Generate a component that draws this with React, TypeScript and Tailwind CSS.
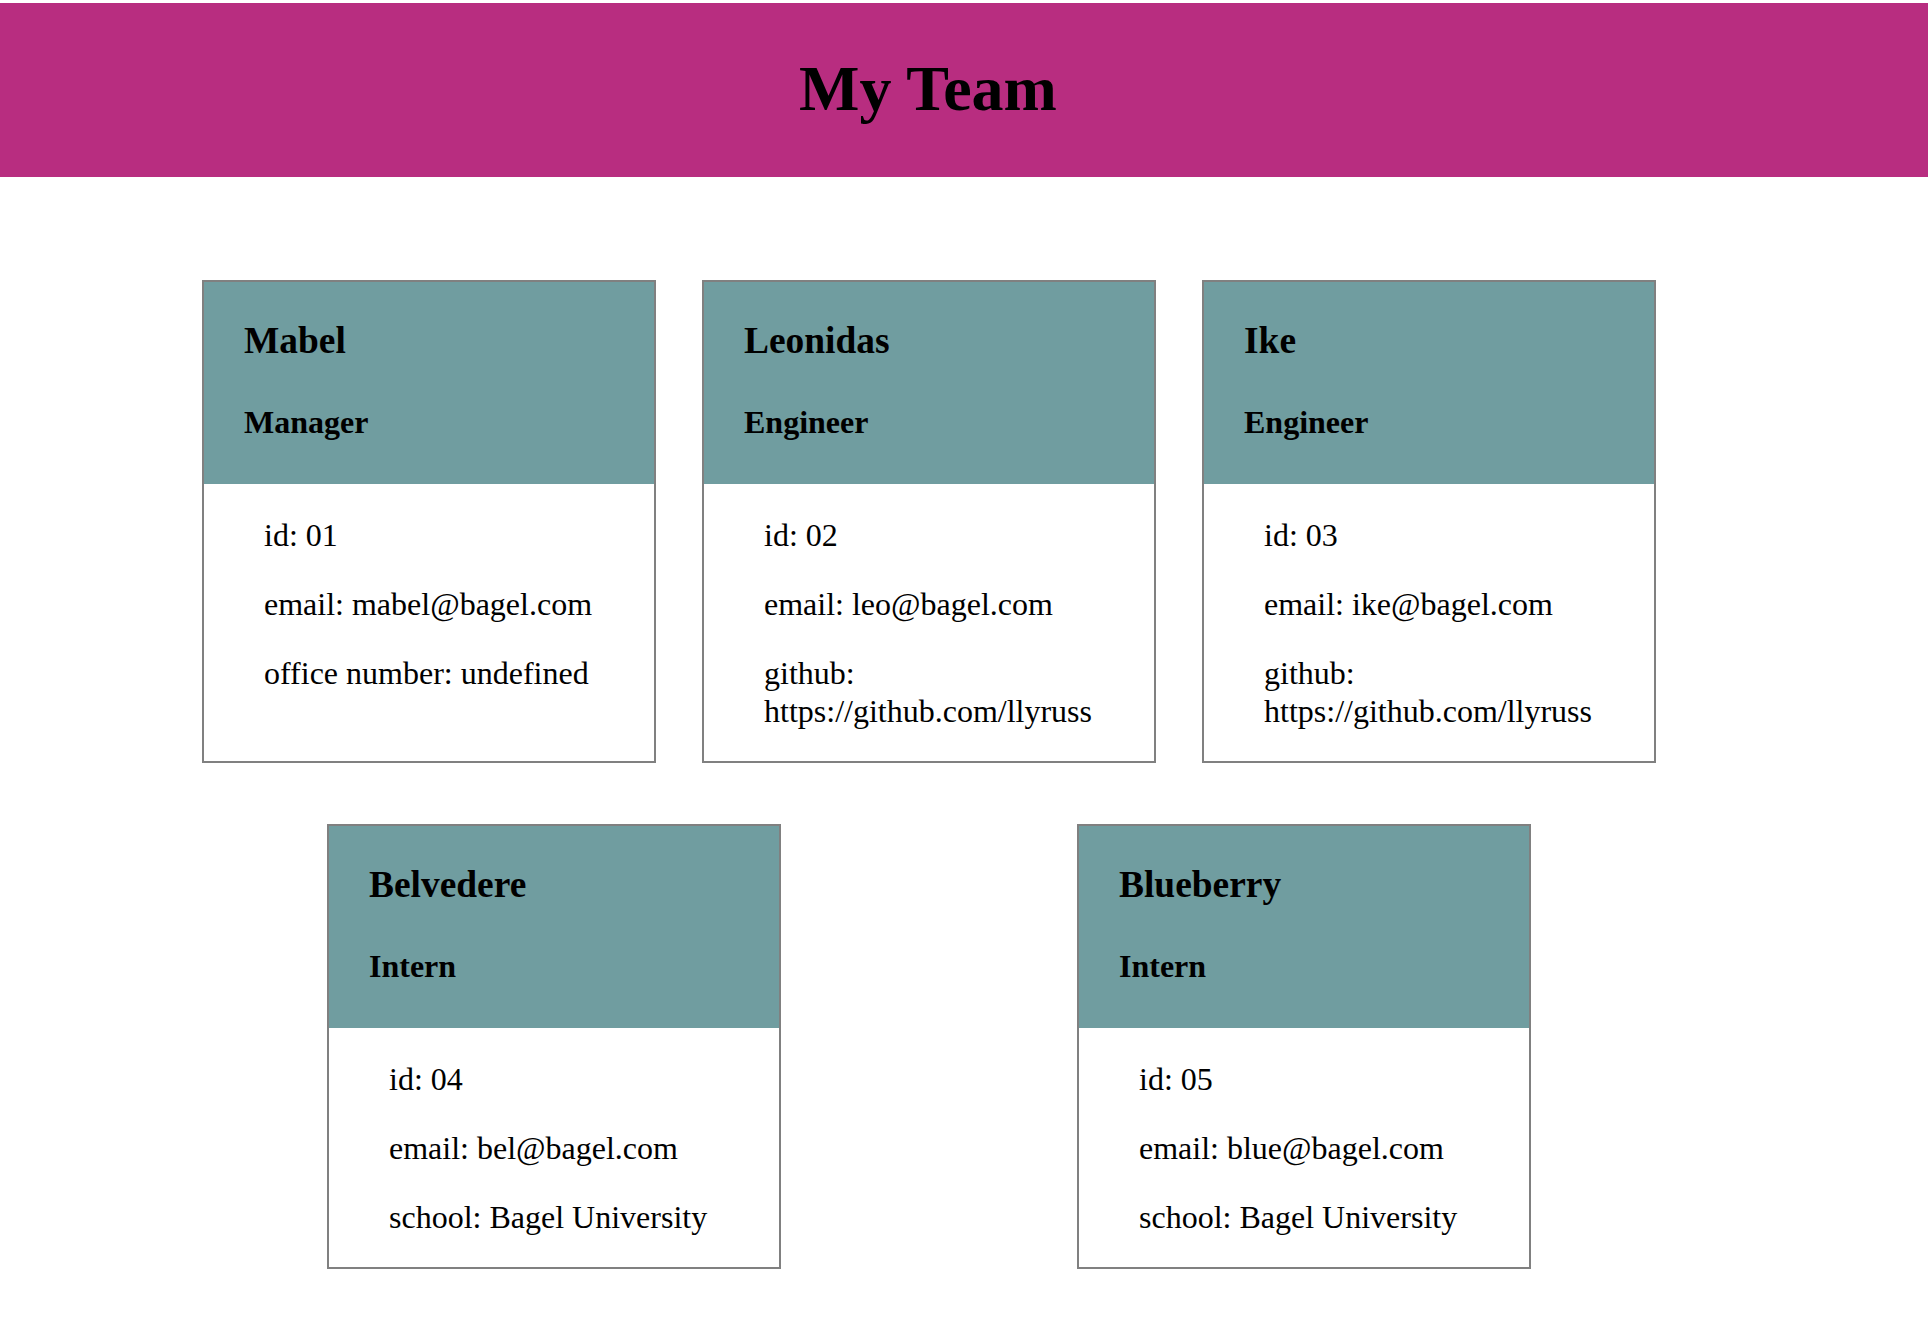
import React from 'react'

interface Member {
  name: string
  role: string
  id: string
  email: string
  extra: string
}

const team: Member[] = [
  { name: 'Mabel', role: 'Manager', id: '01', email: 'mabel@bagel.com', extra: 'office number: undefined' },
  { name: 'Leonidas', role: 'Engineer', id: '02', email: 'leo@bagel.com', extra: 'github: https://github.com/llyruss' },
  { name: 'Ike', role: 'Engineer', id: '03', email: 'ike@bagel.com', extra: 'github: https://github.com/llyruss' },
  { name: 'Belvedere', role: 'Intern', id: '04', email: 'bel@bagel.com', extra: 'school: Bagel University' },
  { name: 'Blueberry', role: 'Intern', id: '05', email: 'blue@bagel.com', extra: 'school: Bagel University' },
]

function Card({ member }: { member: Member }) {
  return (
    <div className="w-[454px] flex flex-col border-2 border-[#808080] bg-white">
      {/* Name + role */}
      <div className="bg-[#709da0] pl-[40px] pt-[37px] pb-[43px]">
        <h3 className="text-[37.44px] leading-[43px] font-bold">{member.name}</h3>
        <h4 className="mt-[42px] text-[32px] leading-[37px] font-bold">{member.role}</h4>
      </div>

      {/* Details */}
      <div className="flex-1 flex flex-col gap-[31.5px] pl-[60px] pr-[40px] pt-[33px] pb-[30.5px] text-[32px] leading-[37.5px]">
        <p>id: {member.id}</p>
        <p>email: {member.email}</p>
        <p>{member.extra}</p>
      </div>
    </div>
  )
}

export default function App() {
  return (
    <div className="min-h-screen bg-white pt-[3px] text-black font-['Liberation_Serif','Times_New_Roman',serif]">
      {/* Header */}
      <div className="h-[174px] bg-[#b82d80]">
        <div className="w-[1856px] pt-[49px] text-center">
          <h1 className="text-[64px] leading-[74px] font-bold">My Team</h1>
        </div>
      </div>

      {/* Cards */}
      <div className="w-[1858px]">
        <div className="mx-auto mt-[103px] w-[1500px] flex flex-wrap justify-around gap-y-[61px] pb-[50px]">
          {team.map(m => (
            <Card key={m.id} member={m} />
          ))}
        </div>
      </div>
    </div>
  )
}
